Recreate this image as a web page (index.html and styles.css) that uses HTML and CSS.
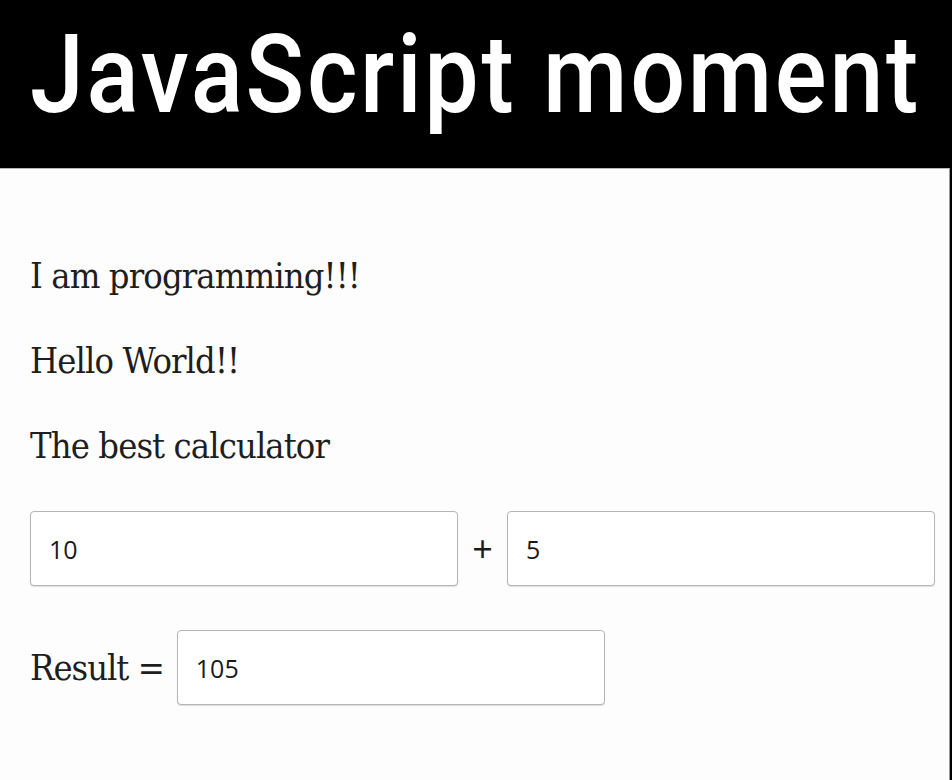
FILE: index.html
```html
<!DOCTYPE html>
<html>
<head>
<meta charset="utf-8">
<title>JavaScript moment</title>
<link rel="stylesheet" href="styles.css">
</head>
<body>
<header class="banner"><h1 class="banner-title">JavaScript moment</h1></header>
<main class="page">
  <p class="line">I am programming!!!</p>
  <p class="line">Hello World!!</p>
  <p class="line">The best calculator</p>
  <div class="calc-row">
    <div class="field">10</div>
    <span class="op">+</span>
    <div class="field">5</div>
  </div>
  <div class="result-row">
    <span class="result-label">Result =</span>
    <div class="field">105</div>
  </div>
</main>
</body>
</html>
```
FILE: styles.css
```css
html, body {
  margin: 0;
  padding: 0;
  height: 100%;
}
body {
  background: #000;
  display: flex;
  flex-direction: column;
  overflow: hidden;
}
.banner {
  height: 168px;
  background: #000;
  flex: none;
  padding-left: 30px;
  box-sizing: border-box;
}
.banner-title {
  margin: 0;
  color: #fff;
  font-family: Roboto, "DejaVu Sans Condensed", sans-serif;
  font-weight: 500;
  font-size: 110px;
  letter-spacing: 3px;
  line-height: 150px;
  white-space: nowrap;
  transform: scaleX(0.881);
  transform-origin: 0 0;
}
.page {
  flex: 1;
  background: #fdfdfd;
  border-top: 1px solid #b8b8b8;
  border-right: 1px solid #9a9a9a;
  margin-right: 2px;
  padding: 64px 0 0 30px;
  font-family: "DejaVu Serif Condensed", "DejaVu Serif", serif;
  color: #1e1e1e;
}
.line {
  margin: 0;
  font-size: 36px;
  letter-spacing: -0.9px;
  line-height: 85px;
}
.calc-row {
  display: flex;
  align-items: center;
  margin-top: 23px;
}
.field {
  width: 428px;
  height: 75px;
  box-sizing: border-box;
  border: 1px solid #b5b5b5;
  border-radius: 4px;
  background: #fff;
  box-shadow: 0 1px 1px rgba(0,0,0,0.12);
  font-family: "Open Sans", sans-serif;
  font-weight: 500;
  font-size: 25px;
  color: #1a1a1a;
  display: flex;
  align-items: center;
  padding-left: 18px;
}
.op {
  width: 49px;
  text-align: center;
  font-family: "Open Sans", sans-serif;
  font-weight: 500;
  font-size: 36px;
  color: #1a1a1a;
}
.result-row {
  display: flex;
  align-items: center;
  gap: 13px;
  margin-top: 44px;
}
.result-label {
  font-size: 36px;
  letter-spacing: -1px;
}
```
